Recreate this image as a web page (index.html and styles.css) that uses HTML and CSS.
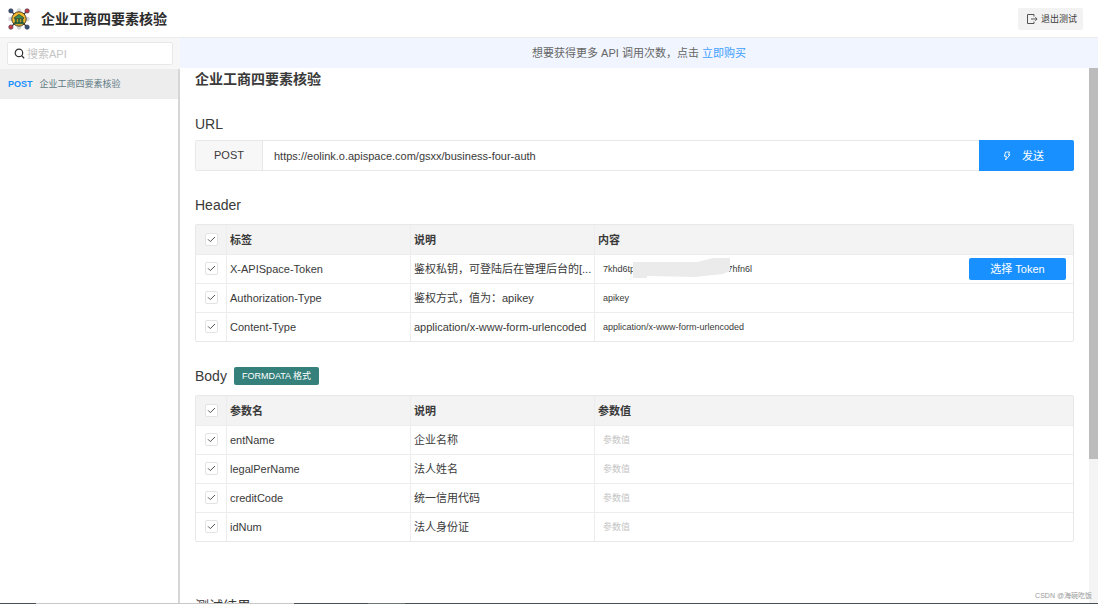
FILE: index.html
```html
<!DOCTYPE html>
<html lang="zh-CN">
<head>
<meta charset="utf-8">
<meta name="viewport" content="width=device-width, initial-scale=1">
<title>企业工商四要素核验</title>
<link rel="stylesheet" href="styles.css">
</head>
<body>
<div class="app">
  <header class="topbar">
    <svg class="logo" viewBox="0 0 22 22" aria-hidden="true">
      <path d="M3 3l16 16M19 3L3 19" stroke="#444" stroke-width="1.200"/>
      <g fill="#d3d5d8"><circle cx="11" cy="2.500" r="2.200"/><circle cx="11" cy="19.500" r="2.200"/><circle cx="2.500" cy="11" r="2.200"/><circle cx="19.500" cy="11" r="2.200"/></g>
      <g stroke="#3b3b44" stroke-width=".6"><circle cx="2.900" cy="2.900" r="2.200" fill="#34507d"/><circle cx="19.100" cy="2.900" r="2.200" fill="#c83a48"/><circle cx="2.900" cy="19.100" r="2.200" fill="#c83a48"/><circle cx="19.100" cy="19.100" r="2.200" fill="#34507d"/></g>
      <circle cx="11" cy="11" r="7.200" fill="#f6b92c" stroke="#4a3d2a" stroke-width="1"/>
      <path d="M6.300 9.600L11 6.400l4.700 3.200v1H6.300z" fill="#3c8a54" stroke="#263c2e" stroke-width=".7"/>
      <path d="M7 11h1.800v3.600H7zM10.100 11h1.800v3.600h-1.800zM13.200 11h1.800v3.600h-1.800zM6.200 14.600h9.600v1.300H6.200z" fill="#2f7a48" stroke="#263c2e" stroke-width=".4"/>
    </svg>
    <div class="brand">企业工商四要素核验</div>
    <button class="exit" type="button">
      <svg class="exit-icon" viewBox="0 0 12 12" aria-hidden="true"><path d="M8 3.500V1.500H1.500v9H8V8.500M5 6h6M9.300 4.200L11.100 6 9.300 7.800" fill="none" stroke="#555" stroke-width="1"/></svg>
      退出测试
    </button>
  </header>
  <div class="body">
    <aside class="sidebar">
      <div class="search-wrap">
        <label class="search">
          <svg class="search-icon" viewBox="0 0 12 12" aria-hidden="true"><circle cx="5.400" cy="5.400" r="4.100" fill="none" stroke="#333" stroke-width="1.300"/><path d="M8.300 8.300l2.800 2.800" stroke="#333" stroke-width="1.400"/></svg>
          <input class="search-input" type="search" placeholder="搜索API" aria-label="搜索API">
        </label>
      </div>
      <nav class="api-list">
        <a class="api-item" href="#api"><span class="method">POST</span><span>企业工商四要素核验</span></a>
      </nav>
    </aside>
    <div class="workspace">
      <p class="notice">想要获得更多 API 调用次数，点击 <a class="notice-link" href="#buy">立即购买</a></p>
      <div class="scroller">
        <main class="content" id="api">
          <h1 class="title">企业工商四要素核验</h1>
          <section class="section url-section">
            <h2 class="heading">URL</h2>
            <div class="url-bar">
              <span class="url-method">POST</span>
              <input class="url-input" type="text" value="https://eolink.o.apispace.com/gsxx/business-four-auth" aria-label="URL">
              <button class="send" type="button">
                <svg class="send-icon" viewBox="0 0 8 10" aria-hidden="true"><path d="M2.600 1h4L5.400 3.800H7L2.500 9l1-3.700H1.400z" fill="none" stroke="#fff" stroke-width=".9"/></svg>
                发送
              </button>
            </div>
          </section>
          <section class="section">
            <h2 class="heading">Header</h2>
            <div class="table-box">
              <table class="params">
                <thead>
                  <tr><th class="col-check"><input class="check" type="checkbox" checked aria-label="全选"></th><th class="col-name">标签</th><th class="col-name">说明</th><th>内容</th></tr>
                </thead>
                <tbody>
                  <tr>
                    <td class="col-check"><input class="check" type="checkbox" checked aria-label="X-APISpace-Token"></td><td>X-APISpace-Token</td><td>鉴权私钥，可登陆后在管理后台的[...</td>
                    <td><div class="value-cell">
                      <input class="value" type="text" value="7khd6tp                                     7hfn6l" aria-label="X-APISpace-Token 内容">
                      <svg class="smear" viewBox="0 0 98 20" aria-hidden="true"><path d="M0 4L64 4 80 0 97 0 97 13 90 16 62 19 14 18 14 20 0 20z" fill="#ebebeb"/></svg>
                      <button class="token" type="button">选择 Token</button>
                    </div></td>
                  </tr>
                  <tr><td class="col-check"><input class="check" type="checkbox" checked aria-label="Authorization-Type"></td><td>Authorization-Type</td><td>鉴权方式，值为：apikey</td><td><input class="value" type="text" value="apikey" aria-label="Authorization-Type 内容"></td></tr>
                  <tr><td class="col-check"><input class="check" type="checkbox" checked aria-label="Content-Type"></td><td>Content-Type</td><td>application/x-www-form-urlencoded</td><td><input class="value" type="text" value="application/x-www-form-urlencoded" aria-label="Content-Type 内容"></td></tr>
                </tbody>
              </table>
            </div>
          </section>
          <section class="section">
            <h2 class="heading">Body <span class="tag">FORMDATA 格式</span></h2>
            <div class="table-box">
              <table class="params">
                <thead>
                  <tr><th class="col-check"><input class="check" type="checkbox" checked aria-label="全选"></th><th class="col-name">参数名</th><th class="col-name">说明</th><th>参数值</th></tr>
                </thead>
                <tbody>
                  <tr><td class="col-check"><input class="check" type="checkbox" checked aria-label="entName"></td><td>entName</td><td>企业名称</td><td><input class="value" type="text" placeholder="参数值" aria-label="企业名称"></td></tr>
                  <tr><td class="col-check"><input class="check" type="checkbox" checked aria-label="legalPerName"></td><td>legalPerName</td><td>法人姓名</td><td><input class="value" type="text" placeholder="参数值" aria-label="法人姓名"></td></tr>
                  <tr><td class="col-check"><input class="check" type="checkbox" checked aria-label="creditCode"></td><td>creditCode</td><td>统一信用代码</td><td><input class="value" type="text" placeholder="参数值" aria-label="统一信用代码"></td></tr>
                  <tr><td class="col-check"><input class="check" type="checkbox" checked aria-label="idNum"></td><td>idNum</td><td>法人身份证</td><td><input class="value" type="text" placeholder="参数值" aria-label="法人身份证"></td></tr>
                </tbody>
              </table>
            </div>
          </section>
          <section class="section result">
            <h2 class="heading">测试结果</h2>
          </section>
        </main>
        <div class="track"><div class="thumb"></div></div>
      </div>
    </div>
  </div>
  <div class="taskbar"></div>
  <div class="watermark">CSDN @海碗吃饭</div>
</div>
</body>
</html>
```

FILE: styles.css
```css
* { box-sizing: border-box; }

body {
  margin: 0;
  color: #3a3a3a;
  background: #fff;
  font: 11px/20px "Liberation Sans", "Noto Sans CJK SC", sans-serif;
}

button, input { font: inherit; color: inherit; margin: 0; }
a { text-decoration: none; }

.app {
  position: relative;
  display: flex;
  flex-direction: column;
  height: 100vh;
  overflow: hidden;
}

/* Top bar */
.topbar {
  display: flex;
  flex: none;
  align-items: center;
  height: 38px;
  padding: 0 15px 0 8px;
  border-bottom: 1px solid #ebebeb;
}
.logo { width: 22px; height: 22px; margin-right: 11px; }
.brand { color: #2b2b2b; font-size: 14px; font-weight: bold; }
.exit {
  display: flex;
  align-items: center;
  gap: 3px;
  height: 22px;
  margin-left: auto;
  padding: 0 6px 0 8px;
  border: 0;
  border-radius: 2px;
  background: #f2f2f2;
  font-size: 9px;
}
.exit-icon { width: 12px; height: 12px; }

.body { display: flex; flex: 1; min-height: 0; }

/* Sidebar */
.sidebar {
  display: flex;
  flex: none;
  flex-direction: column;
  width: 180px;
}
.search-wrap {
  height: 31px;
  padding: 4px 7px;
  background: #f7f7f7;
}
.search {
  display: flex;
  align-items: center;
  gap: 2px;
  height: 23px;
  padding: 0 6px;
  border: 1px solid #e8e8e8;
  border-radius: 2px;
  background: #fff;
}
.search-icon { flex: none; width: 11px; height: 11px; }
.search-input {
  width: 100%;
  min-width: 0;
  padding: 0;
  border: 0;
  outline: 0;
  background: none;
  appearance: none;
}
.search-input::placeholder { color: #c4c4c4; }
.api-list { flex: 1; border-right: 2px solid #d6d6d6; }
.api-item {
  display: flex;
  align-items: center;
  gap: 7px;
  height: 30px;
  padding-left: 8px;
  background: #ededed;
  color: #5f7a84;
  font-size: 9px;
}
.method { color: #1890ff; font-weight: bold; }

/* Workspace */
.workspace { display: flex; flex: 1; flex-direction: column; min-width: 0; }
.notice {
  flex: none;
  height: 30px;
  margin: 0;
  padding-top: 5px;
  background: #f0f5ff;
  color: #666;
  text-align: center;
}
.notice-link { color: #40a0ff; }
.scroller { display: flex; flex: 1; min-height: 0; overflow: hidden; }
.content { flex: 1; min-width: 0; padding: 1px 15px 0; }
.track { flex: none; width: 9px; background: #f4f4f4; }
.thumb { height: 73%; background: #bcbcbc; }

.title { margin: 0; font-size: 14px; line-height: 20px; }
.section { margin-top: 24px; }
.heading {
  display: flex;
  align-items: center;
  gap: 7px;
  margin: 0 0 9px;
  font-size: 14px;
  font-weight: normal;
  line-height: 20px;
}
.url-section { margin-top: 25px; }
.url-section .heading { margin-bottom: 6px; }
.result { margin-top: 54px; }
.tag {
  height: 18px;
  padding: 0 8px;
  border-radius: 2px;
  background: #35807b;
  color: #fff;
  font-size: 9px;
  line-height: 18px;
}

/* Request line */
.url-bar {
  display: flex;
  height: 31px;
  border: 1px solid #e8e8e8;
  border-radius: 2px;
}
.url-method {
  width: 67px;
  border-right: 1px solid #e8e8e8;
  background: #f7f7f7;
  line-height: 29px;
  text-align: center;
}
.url-input {
  flex: 1;
  min-width: 0;
  padding: 0 11px;
  border: 0;
  outline: 0;
  background: none;
}
.send {
  display: flex;
  align-items: center;
  justify-content: center;
  gap: 11px;
  width: 95px;
  margin: -1px -1px -1px 0;
  padding: 0 6px 0 0;
  border: 0;
  border-radius: 0 2px 2px 0;
  background: #1890ff;
  color: #fff;
}
.send-icon { width: 8px; height: 10px; }

/* Parameter tables */
.table-box { border: 1px solid #e8e8e8; border-radius: 2px; }
.params {
  width: 100%;
  border-collapse: separate;
  border-spacing: 0;
  table-layout: fixed;
}
.params th, .params td {
  height: 29px;
  padding: 0 0 0 3px;
  overflow: hidden;
  border-right: 1px solid #ededed;
  border-bottom: 1px solid #ededed;
  text-align: left;
  text-overflow: ellipsis;
  white-space: nowrap;
}
.params th { height: 30px; background: #f3f3f3; }
.params th:last-child, .params td:last-child { border-right: 0; }
.params tbody tr:last-child td { height: 28px; border-bottom: 0; }
.params .col-check { width: 31px; padding: 0; text-align: center; }
.params td.col-check { padding-bottom: 2px; }
.col-name { width: 184px; }
.check {
  display: block;
  width: 13px;
  height: 13px;
  margin: 0 auto;
  border: 1px solid #e3e3e3;
  border-radius: 2px;
  appearance: none;
  background: #fff center no-repeat;
}
.check:checked {
  background-image: url("data:image/svg+xml,%3Csvg xmlns='http://www.w3.org/2000/svg' viewBox='0 0 11 11'%3E%3Cpath d='M2 5.300l2.300 2.300L9 3' fill='none' stroke='%23555'/%3E%3C/svg%3E");
}
.value-cell { position: relative; display: flex; align-items: center; }
.value {
  display: block;
  flex: 1;
  width: 100%;
  min-width: 0;
  height: 20px;
  padding: 0 5px;
  border: 0;
  outline: 0;
  background: none;
  font-size: 9px;
}
.value::placeholder { color: #c4c4c4; }
.smear {
  position: absolute;
  top: 0;
  left: 35px;
  width: 98px;
  height: 20px;
}
.token {
  width: 97px;
  height: 22px;
  margin-right: 7px;
  padding: 0;
  border: 0;
  border-radius: 2px;
  background: #1890ff;
  color: #fff;
}

/* Bottom edge strip and credit */
.taskbar {
  flex: none;
  height: 1px;
  background: linear-gradient(to right, #485058 36px, #c9c9c9 36px, #c9c9c9 294px, #485058 294px, #485058 368px, #6f7674 368px, #6f7674 405px, #485058 405px);
}
.watermark {
  position: absolute;
  right: 6px;
  bottom: 3px;
  color: #999;
  font-size: 7px;
  line-height: 10px;
}
```
